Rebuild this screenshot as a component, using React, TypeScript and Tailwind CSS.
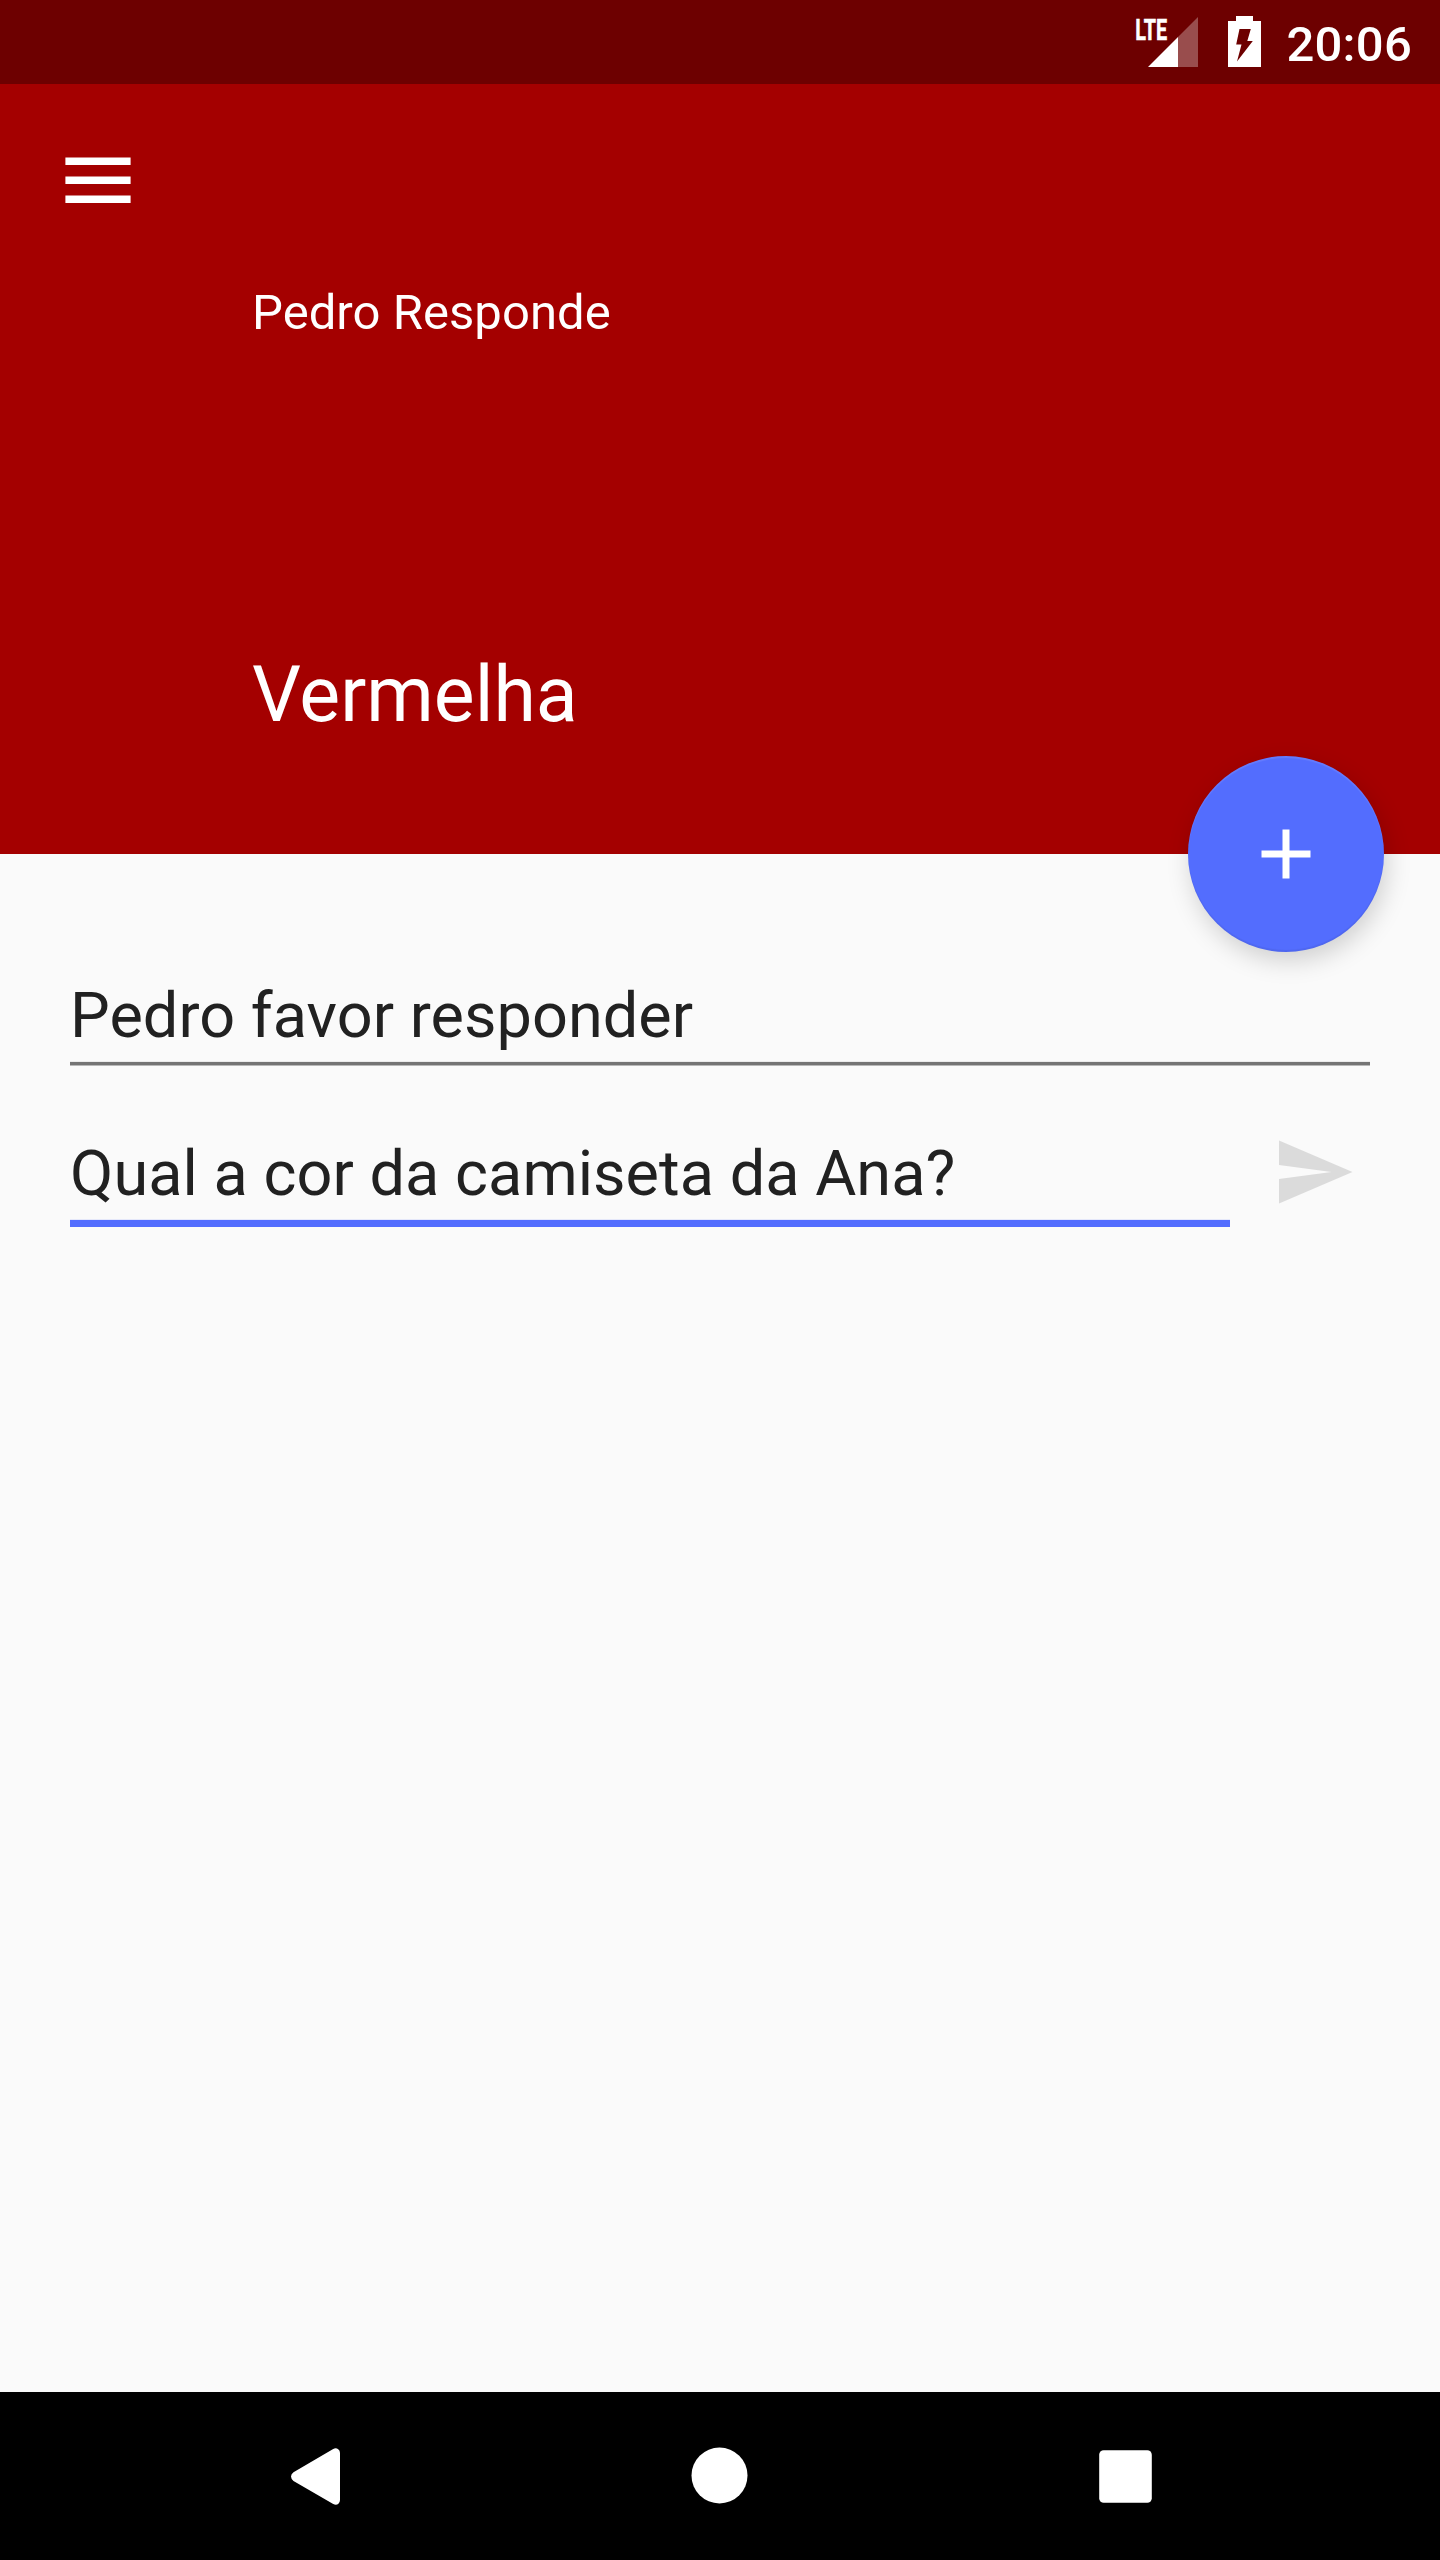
import React from 'react';

interface FieldProps {
  value: string;
  children: React.ReactNode;
  className?: string;
}

const StatusBar: React.FC = () => (
  <div className="flex h-[84px] justify-end bg-[#6d0000] pr-[28px] text-white">
    {/* LTE signal */}
    <svg className="h-[84px] w-[64px]" viewBox="1136 0 64 84" fill="currentColor">
      <text x="1136.2" y="39.5" fontFamily="Roboto, sans-serif" fontSize="30" fontWeight="700" textLength="32" lengthAdjust="spacingAndGlyphs" stroke="currentColor" strokeWidth="0.5">LTE</text>
      <path d="M1149 67L1179 37V67Z" />
      <path d="M1179 37L1199 17V67H1179Z" fillOpacity="0.3" />
    </svg>
    {/* Charging battery */}
    <svg className="ml-[28px] h-[84px] w-[36px]" viewBox="1228 0 36 84" fill="currentColor" fillRule="evenodd">
      <path d="M1237 16H1254V21H1262V67H1229V21H1237ZM1240.5 29L1237.2 44.5H1242.5L1238 61.5L1253.8 41H1248.3L1251.8 29Z" />
    </svg>
    <span className="ml-[23px] mt-[16px] text-[49px] font-medium leading-[58px] tracking-[0.25px]">20:06</span>
  </div>
);

const Header: React.FC = () => (
  <header className="relative flex h-[770px] flex-col bg-[#a40000] text-white">
    <button className="ml-[56px] mt-[54px] h-[84px] w-[84px]" aria-label="Menu">
      <svg viewBox="0 0 84 84" fill="currentColor">
        <path d="M9.4 19.5H74.6V27H9.4ZM9.4 38.5H74.6V46H9.4ZM9.4 57.5H74.6V65H9.4Z" />
      </svg>
    </button>
    <p className="ml-[252px] mt-[62px] text-[49px] leading-[58px] tracking-[0.05px]">Pedro Responde</p>
    <h1 className="ml-[252px] mt-[308px] text-[77px] leading-[90px]">Vermelha</h1>

    <button className="absolute -bottom-[98px] right-[56px] flex h-[196px] w-[196px] items-center justify-center rounded-full bg-[#536dfe] shadow-[3px_9px_24px_rgba(0,0,0,0.17),inset_0_2px_1px_rgba(255,255,255,0.1),inset_0_-2px_1px_rgba(0,0,0,0.06)]" aria-label="Adicionar">
      <svg className="h-[84px] w-[84px]" viewBox="0 0 84 84" fill="currentColor">
        <path d="M17.5 38.5H38.5V17.5H45.5V38.5H66.5V45.5H45.5V66.5H38.5V45.5H17.5Z" />
      </svg>
    </button>
  </header>
);

const Field: React.FC<FieldProps> = ({ value, children, className }) => (
  <div className={className}>
    <p className="whitespace-nowrap text-[63px] leading-[74px] tracking-[0.04px] text-[#212121]">{value}</p>
    {children}
  </div>
);

const NavigationBar: React.FC = () => (
  <nav className="flex h-[168px] items-center bg-black text-white">
    <svg className="ml-[274px] h-[84px] w-[84px]" viewBox="274 2434 84 84" fill="currentColor">
      <path d="M293.5 2472.3L333.2 2449Q336 2447.5 338.2 2449.3Q340 2450.5 340 2453V2500Q340 2502.5 338.2 2504Q336 2505.6 333.2 2504L293.5 2481Q291 2479 291 2476.6Q291 2474 293.5 2472.3Z" />
    </svg>
    <svg className="ml-[320px] h-[84px] w-[84px]" viewBox="678 2434 84 84" fill="currentColor">
      <circle cx="719.5" cy="2475.5" r="28" />
    </svg>
    <svg className="ml-[322px] h-[84px] w-[84px]" viewBox="1084 2434 84 84" fill="currentColor">
      <rect x="1099.2" y="2450.2" width="52.6" height="52.6" rx="4.5" />
    </svg>
  </nav>
);

export default function App() {
  return (
    <div className="flex h-[2560px] w-[1440px] flex-col overflow-hidden bg-[#fafafa] font-['Roboto',sans-serif]">
      <StatusBar />
      <Header />

      <main className="flex-1 px-[70px] pt-[125px]">
        <Field value="Pedro favor responder">
          <div className="mt-[8px] h-[5px] border-b border-t border-b-[#b8b8b8] border-t-[#ebebeb] bg-[#747474]" />
        </Field>
        <div className="mt-[71px] flex items-start">
          <Field value="Qual a cor da camiseta da Ana?" className="w-[1160px]">
            <div className="mt-[8px] h-[8px] border-t border-[#e5e8fa] bg-[#536dfe]" />
          </Field>
          <button className="-mt-[7px] ml-[42px] h-[84px] w-[84px] text-[#dbdbdb]" aria-label="Enviar">
            <svg viewBox="0 0 24 24" fill="currentColor">
              <path d="M2.01 21L23 12 2.01 3 2 10l15 2-15 2z" />
            </svg>
          </button>
        </div>
      </main>

      <NavigationBar />
    </div>
  );
}
